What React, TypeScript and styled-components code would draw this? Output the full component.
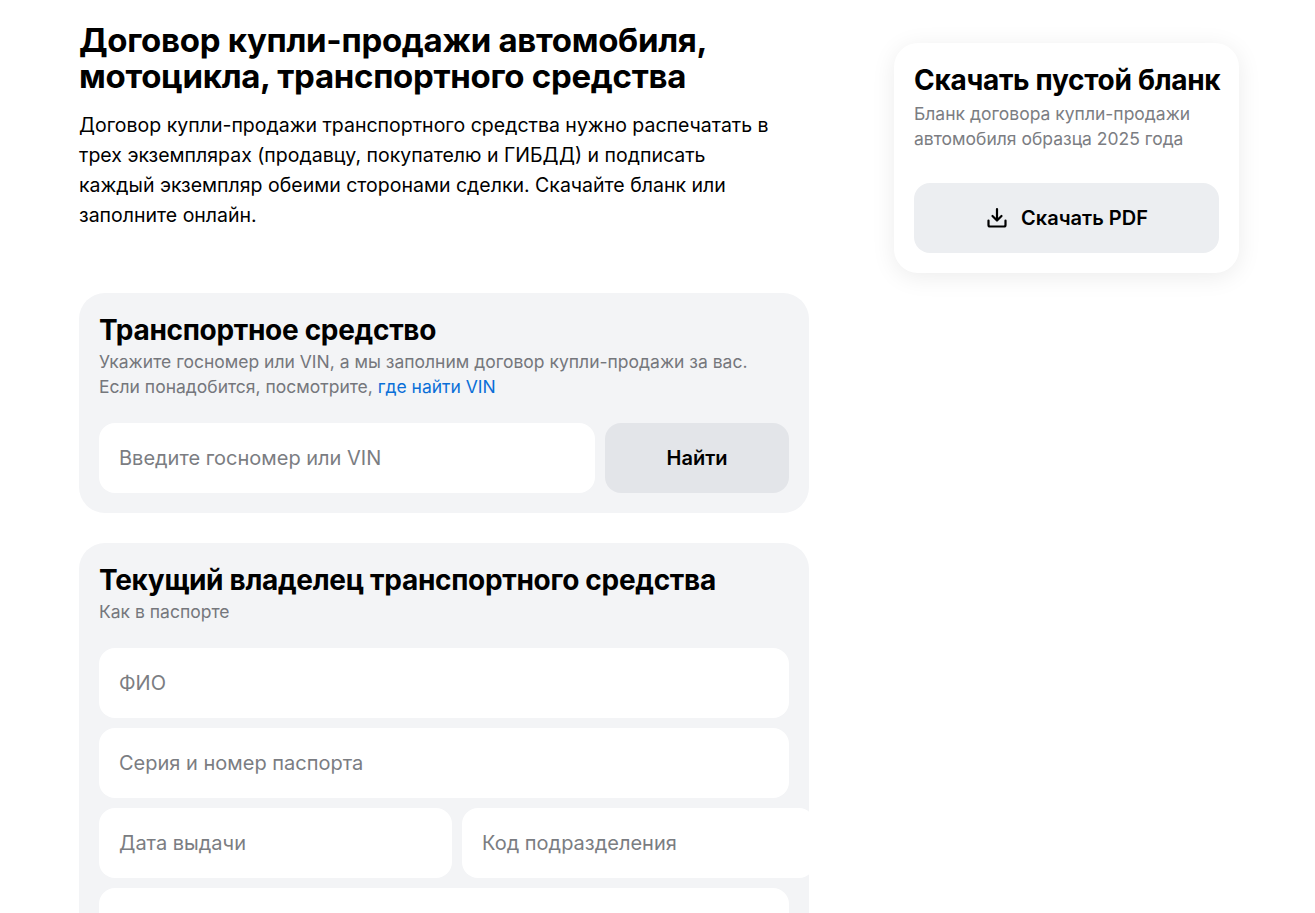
import React from 'react';
import styled, { createGlobalStyle } from 'styled-components';

const GlobalStyle = createGlobalStyle`
  body {
    margin: 0;
    background: #fff;
    font-family: Inter, "Noto Sans", Arial, sans-serif;
    color: #000;
  }
`;

const Page = styled.div`
  display: flex;
  align-items: flex-start;
  gap: 85px;
  padding: 22px 0 0 79px;
`;

const Main = styled.div`
  width: 730px;
  display: flex;
  flex-direction: column;
`;

const Title = styled.h1`
  font-size: 33px;
  line-height: 36px;
  font-weight: 700;
  letter-spacing: -0.3px;
  margin: 0 0 16px;
`;

const Lead = styled.p`
  font-size: 19.5px;
  line-height: 30px;
  margin: 0 0 63px;
  width: 700px;
`;

const Section = styled.section`
  background: #f3f4f6;
  border-radius: 26px;
  padding: 20px;
  margin-bottom: 30px;
`;

const SectionTitle = styled.h2`
  font-size: 28px;
  line-height: 34px;
  font-weight: 700;
  letter-spacing: -0.3px;
  margin: 0 0 2px;
`;

const Hint = styled.p`
  font-size: 17.5px;
  line-height: 25px;
  color: #75777c;
  margin: 0 0 24px;
  a { color: #0a6fd8; text-decoration: none; }
`;

const Row = styled.div<{ $cols?: string }>`
  display: grid;
  grid-template-columns: ${({ $cols }) => $cols || '1fr'};
  gap: 10px;
  margin-bottom: 10px;
  &:last-child { margin-bottom: 0; }
`;

const Field = styled.input`
  height: 70px;
  border: none;
  border-radius: 16px;
  background: #fff;
  padding: 0 20px;
  font: inherit;
  font-size: 20px;
  outline: none;
  &::placeholder { color: #7b7d82; }
`;

const GrayButton = styled.button<{ $light?: boolean }>`
  height: 70px;
  width: 100%;
  border: none;
  border-radius: 16px;
  background: ${({ $light }) => ($light ? '#eceef1' : '#e3e5e9')};
  font: inherit;
  font-size: 20px;
  font-weight: 600;
  color: #000;
  display: flex;
  align-items: center;
  justify-content: center;
  gap: 12px;
`;

const Aside = styled.aside`
  width: 345px;
  margin-top: 21px;
  background: #fff;
  border-radius: 24px;
  box-shadow: 0 4px 24px rgba(0, 0, 0, 0.08);
  padding: 20px;
  box-sizing: border-box;
`;

const AsideTitle = styled.h3`
  font-size: 28px;
  line-height: 34px;
  font-weight: 700;
  letter-spacing: -0.3px;
  margin: 0 0 4px;
  white-space: nowrap;
`;

const AsideText = styled.p`
  font-size: 17.5px;
  line-height: 25px;
  color: #7b7d82;
  margin: 0 0 32px;
`;

const DownloadIcon = () => (
  <svg width="24" height="24" viewBox="0 0 24 24" fill="none" stroke="#000" strokeWidth="2.2" strokeLinecap="round" strokeLinejoin="round">
    <path d="M12 3v11M7.5 10l4.5 4.5 4.5-4.5" />
    <path d="M3.5 14.5V19a1.5 1.5 0 0 0 1.5 1.5h14a1.5 1.5 0 0 0 1.5-1.5v-4.5" />
  </svg>
);

export default function App() {
  return (
    <>
      <GlobalStyle />
      <Page>
        <Main>
          <Title>Договор купли-продажи автомобиля, мотоцикла, транспортного средства</Title>
          <Lead>
            Договор купли-продажи транспортного средства нужно распечатать в трех экземплярах (продавцу, покупателю и ГИБДД) и подписать каждый экземпляр обеими сторонами сделки. Скачайте бланк или заполните онлайн.
          </Lead>
          <Section>
            <SectionTitle>Транспортное средство</SectionTitle>
            <Hint>
              Укажите госномер или VIN, а мы заполним договор купли-продажи за вас.
              <br />
              Если понадобится, посмотрите, <a href="#">где найти VIN</a>
            </Hint>
            <Row $cols="1fr 184px">
              <Field placeholder="Введите госномер или VIN" />
              <GrayButton>Найти</GrayButton>
            </Row>
          </Section>
          <Section>
            <SectionTitle>Текущий владелец транспортного средства</SectionTitle>
            <Hint>Как в паспорте</Hint>
            <Row><Field placeholder="ФИО" /></Row>
            <Row><Field placeholder="Серия и номер паспорта" /></Row>
            <Row $cols="1fr 1fr">
              <Field placeholder="Дата выдачи" />
              <Field placeholder="Код подразделения" />
            </Row>
            <Row><Field placeholder="Кем выдан" /></Row>
          </Section>
        </Main>
        <Aside>
          <AsideTitle>Скачать пустой бланк</AsideTitle>
          <AsideText>Бланк договора купли-продажи автомобиля образца 2025 года</AsideText>
          <GrayButton $light>
            <DownloadIcon />
            Скачать PDF
          </GrayButton>
        </Aside>
      </Page>
    </>
  );
}
